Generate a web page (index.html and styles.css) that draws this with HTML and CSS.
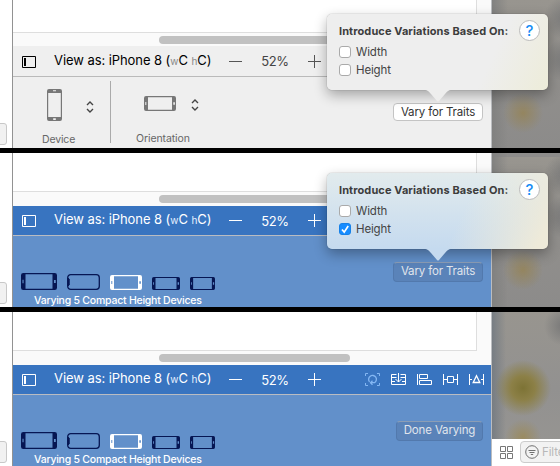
FILE: index.html
```
<!DOCTYPE html>
<html lang="en">
<head>
<meta charset="utf-8">
<title>Vary for Traits</title>
<link rel="stylesheet" href="styles.css">
</head>
<body>
<svg width="0" height="0" class="defs">
  <symbol id="sidebar" viewBox="0 0 14 12"><path d="M.5.5h13v11H.5z" fill="none" stroke="currentColor"/><path d="M2 2h2v8H2z" fill="currentColor"/></symbol>
  <symbol id="phone" viewBox="0 0 32 15" preserveAspectRatio="none"><path fill="currentColor" fill-rule="evenodd" d="M2 0h28q2 0 2 2v11q0 2-2 2H2q-2 0-2-2V2q0-2 2-2zM4 1.2v12.6h24V1.2zM1.3 6v3h1V6zM29.3 6.2v2.6h1.6V6.2z"/></symbol>
  <symbol id="phonex" viewBox="0 0 33 16"><rect x=".7" y=".7" width="31.6" height="14.6" rx="3" fill="none" stroke="currentColor" stroke-width="1.3"/><path d="M1 4l1.2 1v6L1 12z" fill="currentColor" stroke="currentColor"/></symbol>
  <symbol id="minus" viewBox="0 0 13 13"><path d="M0 6.5h13" stroke="currentColor"/></symbol>
  <symbol id="plus" viewBox="0 0 13 13"><path d="M0 6.5h13M6.5 0v13" stroke="currentColor"/></symbol>
  <symbol id="updown" viewBox="0 0 8 12"><path d="M1 4l3-3 3 3M1 8l3 3 3-3" fill="none" stroke="currentColor" stroke-width="1.4"/></symbol>
</svg>

<section class="panel first">
  <div class="left"><i class="stub"></i></div>
  <div class="main">
    <div class="canvas"></div>
    <div class="track"><i class="thumb"></i></div>
    <div class="bar">
      <svg class="side-icon"><use href="#sidebar"/></svg>
      <span class="title">View as: iPhone 8 (<small>w</small>C <small>h</small>C)</span>
      <svg class="sign"><use href="#minus"/></svg><span class="pct">52%</span><svg class="sign"><use href="#plus"/></svg>
    </div>
    <div class="tray traits">
      <div class="device">
        <div class="pick"><svg class="portrait" viewBox="0 0 15 32"><use href="#phone" width="32" height="15" transform="translate(15 0) rotate(90)"/></svg><svg class="updown"><use href="#updown"/></svg></div>
        <span>Device</span>
      </div>
      <div class="orientation">
        <div class="pick"><svg class="landscape"><use href="#phone"/></svg><svg class="updown"><use href="#updown"/></svg></div>
        <span>Orientation</span>
      </div>
      <button class="vary">Vary for Traits</button>
    </div>
  </div>
  <div class="right"></div>
  <div class="popover">
    <h2>Introduce Variations Based On:</h2><b class="help">?</b>
    <label><i class="check"></i>Width</label>
    <label><i class="check"></i>Height</label>
    <svg class="arrow" viewBox="0 0 28 13"><path d="M0 0c4 0 5 2 7 4l6 7q1 1 2 0l6-7c2-2 3-4 7-4z" fill="#eeeeed"/></svg>
  </div>
</section>

<section class="panel second blue">
  <div class="left"><i class="stub"></i></div>
  <div class="main">
    <div class="canvas"></div>
    <div class="track"><i class="thumb"></i></div>
    <div class="bar">
      <svg class="side-icon"><use href="#sidebar"/></svg>
      <span class="title">View as: iPhone 8 (<small>w</small>C <small>h</small>C)</span>
      <svg class="sign"><use href="#minus"/></svg><span class="pct">52%</span><svg class="sign"><use href="#plus"/></svg>
    </div>
    <div class="tray">
      <div class="varying">
        <div class="devices">
          <svg class="d1"><use href="#phone"/></svg><svg class="d2"><use href="#phonex"/></svg><svg class="d3"><use href="#phone"/></svg><svg class="d4"><use href="#phone"/></svg><svg class="d5"><use href="#phone"/></svg>
        </div>
        <span>Varying 5 Compact Height Devices</span>
      </div>
      <button class="vary">Vary for Traits</button>
    </div>
  </div>
  <div class="right"></div>
  <div class="popover">
    <h2>Introduce Variations Based On:</h2><b class="help">?</b>
    <label><i class="check"></i>Width</label>
    <label><i class="check on"><svg viewBox="0 0 12 12"><path d="M3 6.5l2.2 2.6L9.2 3" fill="none" stroke="#fff" stroke-width="1.7"/></svg></i>Height</label>
    <svg class="arrow" viewBox="0 0 28 13"><path d="M0 0c4 0 5 2 7 4l6 7q1 1 2 0l6-7c2-2 3-4 7-4z" fill="#c5daef"/></svg>
  </div>
</section>

<section class="panel third blue">
  <div class="left"><i class="stub"></i></div>
  <div class="main">
    <div class="canvas"></div>
    <div class="track"><i class="thumb"></i></div>
    <div class="bar">
      <svg class="side-icon"><use href="#sidebar"/></svg>
      <span class="title">View as: iPhone 8 (<small>w</small>C <small>h</small>C)</span>
      <svg class="sign"><use href="#minus"/></svg><span class="pct">52%</span><svg class="sign"><use href="#plus"/></svg>
      <div class="tools">
        <svg class="faded" viewBox="0 0 15 13"><path d="M3 .5H.5V3M.5 10v2.5H3M12 .5h2.5V3M14.5 10v2.5H12"/><path class="bold" d="M4.500 8.800A3.900 3.900 0 1 1 9.500 9.700H5.500M7.500 7.700l-2 2 2 2"/></svg>
        <svg viewBox="0 0 15 13"><path d="M5.500 1.500h-5v10h14v-10h-5M.5 4.500h5M9.500 4.500h5M.5 8.500H4M11 8.500h3.500M7.500 0v9M4.500 6l3 3 3-3"/></svg>
        <svg viewBox="0 0 15 13"><path d="M.5 1v11M2.500 1.500h8v4h-8zM2.500 7.500h12v4h-12z"/></svg>
        <svg viewBox="0 0 15 13"><path d="M.5 1v11M14.5 1v11M.5 6.500h4M10.500 6.500h4M4.500 3.500h6v6h-6z"/></svg>
        <svg viewBox="0 0 15 13"><path d="M.5 1v11M14.5 1v11M.5 6.500H3M12 6.500h2.500"/><path class="bold" d="M7.500 2.800l3.300 6.700H4.200z"/></svg>
      </div>
    </div>
    <div class="tray">
      <div class="varying">
        <div class="devices">
          <svg class="d1"><use href="#phone"/></svg><svg class="d2"><use href="#phonex"/></svg><svg class="d3"><use href="#phone"/></svg><svg class="d4"><use href="#phone"/></svg><svg class="d5"><use href="#phone"/></svg>
        </div>
        <span>Varying 5 Compact Height Devices</span>
      </div>
      <button class="vary done">Done Varying</button>
    </div>
  </div>
  <div class="right">
    <div class="filterbar">
      <svg class="grid" viewBox="0 0 13 13"><path d="M.5.5h5v5h-5zM7.5.5h5v5h-5zM.5 7.500h5v5h-5zM7.500 7.500h5v5h-5z"/></svg>
      <div class="filter"><svg viewBox="0 0 14 14"><circle cx="7" cy="7" r="6.300"/><path d="M3.500 5.500h7M4.500 7.500h5M5.800 9.500h2.400"/></svg><span>Filter</span></div>
    </div>
  </div>
</section>
</body>
</html>
```
FILE: styles.css
```
* { box-sizing: border-box; }
body { margin: 0; width: 560px; height: 466px; overflow: hidden; background: #000; display: flex; flex-direction: column; gap: 5px; font-family: Inter, "Liberation Sans", sans-serif; }
svg { display: block; flex: none; }
.defs { position: absolute; }
i { font-style: normal; display: block; }
.panel { position: relative; display: flex; overflow: hidden; flex: none; }
.first { height: 148px; }
.second, .third { height: 154px; }
.left { width: 13px; flex: none; background: #fff; border-right: 1px solid #929292; display: flex; align-items: flex-end; overflow: hidden; }
.stub { width: 10px; height: 22px; margin: 0 0 3px -3px; background: #f1f1f1; border: 1px solid #c8c8c8; border-radius: 3px; flex: none; }
.main { width: 479px; flex: none; display: flex; flex-direction: column; background: #fafafa; border-right: 1px solid #bbbdc0; }
.canvas { width: 464px; height: 33px; background: #fff; border-bottom: 1px solid #dedede; border-right: 1px solid #dedede; flex: none; }
.second .canvas, .third .canvas { height: 39px; }
.track { height: 13px; flex: none; padding: 3px 0 0 146px; }
.second .track, .third .track { height: 14px; }
.thumb { width: 191px; height: 8px; border-radius: 4px; background: #c1c1c1; }
.bar { height: 31px; flex: none; display: flex; align-items: center; padding-left: 9px; background: #efefef; border-bottom: 1px solid #bababa; color: #000; }
.blue .bar { height: 30px; background: #3874c0; border-color: #b9bcc2; color: #fff; }
.side-icon { width: 14px; height: 12px; margin: 1px 18px 0 0; }
.title { width: 175px; margin-top: -1px; font-size: 13px; line-height: 16px; letter-spacing: -.07px; white-space: pre; }
.blue .title { margin-top: -2px; }
.title small { font-size: 10px; color: #888; }
.blue .title small { color: #e6f0ff; }
.sign { width: 13px; height: 13px; color: #555; }
.blue .sign { color: #fff; }
.pct { width: 66px; text-align: center; font-size: 13px; letter-spacing: -.3px; color: #444; }
.blue .pct { color: #fff; }
.tray { flex: 1; display: flex; background: #efefef; }
.blue .tray { background: #6290ca; }
.vary { margin: 26px 8px 0 auto; width: 90px; height: 18px; padding: 0; font: 11.5px/16px Inter, sans-serif; letter-spacing: -.15px; color: #333; background: #fff; border: 1px solid #c4c4c4; border-radius: 4px; white-space: nowrap; }
.blue .vary { height: 20px; padding-bottom: 2px; background: #5a83b9; border-color: #5279ad; border-top-color: #8b9db5; color: #e0e5ec; }
.vary.done { width: 87px; }
.traits span { font-size: 10.5px; line-height: 14px; color: #666; }
.device { width: 98px; height: 62px; margin-top: 4px; border-right: 1px solid #aaa; padding: 8px 0 0 29px; }
.pick { height: 32px; display: flex; align-items: center; }
.portrait { width: 15px; height: 32px; margin-left: 5px; color: #777; }
.updown { width: 8px; height: 12px; margin: 3px 0 0 24px; color: #444; }
.device > span { display: block; margin-top: 12px; letter-spacing: -.15px; }
.orientation { width: 110px; padding: 10px 0 0 25px; }
.landscape { width: 32px; height: 15px; margin-left: 8px; color: #777; }
.orientation .updown { margin: 4px 0 0 15px; }
.orientation > span { display: block; margin-top: 13px; letter-spacing: -.1px; }
.varying { padding: 37px 0 0 8px; width: 220px; color: #fff; }
.devices { display: flex; align-items: flex-end; color: #061653; }
.d1 { width: 36px; height: 17px; }
.d2 { width: 33px; height: 16px; margin-left: 10px; }
.d3 { width: 32px; height: 15px; margin-left: 10px; color: #fff; }
.d4 { width: 28px; height: 13px; margin-left: 10px; }
.d5 { width: 25px; height: 13px; margin-left: 10px; }
.varying > span { display: block; margin: 4px 0 0 13px; font-size: 10.5px; line-height: 13px; font-weight: 500; white-space: nowrap; letter-spacing: -.23px; }
.tools { display: flex; gap: 11px; margin-left: 44px; }
.tools svg { width: 15px; height: 13px; fill: none; stroke: #fff; }
.tools .faded { stroke: #84b7f3; }
.tools .bold { stroke-width: 1.3; }
.right { width: 68px; flex: none; display: flex; align-items: flex-end; background: radial-gradient(circle at 31px 113px, #94855f 0, rgba(148,133,95,0) 20px), radial-gradient(circle at 74px 18px, #777 0, rgba(119,119,119,0) 22px), radial-gradient(circle at 74px 60px, #777 0, rgba(119,119,119,0) 22px), linear-gradient(90deg, #818180, rgba(140,140,140,0) 16px), linear-gradient(#98958f, #918f8c 50%, #8c8b8a); }
.second .right { background-position: 0 4px; }
.third .right { background: radial-gradient(circle at 31px 76px, #7d7335 0, #8c8047 12px, rgba(146,137,92,0) 28px), radial-gradient(circle at 31px 125px, #9a8b61 0, rgba(154,139,97,0) 18px), radial-gradient(circle at 72px 14px, #777 0, rgba(119,119,119,0) 20px), linear-gradient(90deg, #777d83, rgba(140,140,140,0) 14px), linear-gradient(#98958f, #929190 50%, #989692); }
.filterbar { width: 68px; height: 27px; background: #fff; display: flex; padding: 2px 0 0 8px; overflow: hidden; }
.grid { width: 13px; height: 13px; margin-top: 5px; fill: none; stroke: #777; }
.filter { width: 90px; height: 22px; flex: none; margin-left: 7px; border: 1px solid #ccc; border-radius: 4px; background: #f2f2f2; display: flex; align-items: center; gap: 3px; padding-left: 4px; font-size: 11.5px; letter-spacing: -.1px; color: #b8b8b8; }
.filter svg { width: 14px; height: 14px; fill: none; stroke: #707070; }
.popover { position: absolute; left: 327px; top: 14px; width: 221px; height: 76px; border-radius: 5px; background: linear-gradient(115deg, #eee 72%, #edecd9); box-shadow: 0 0 1px rgba(0,0,0,.5), 0 5px 13px rgba(0,0,0,.32); padding: 9px 0 0 12px; color: #444; }
.second .popover { background: linear-gradient(115deg, rgba(226,236,239,0) 60%, #eeead9 95%), linear-gradient(#e2ebed, #c5daef); top: 20px; }
.popover h2 { margin: 0 0 4px; font-size: 11px; line-height: 16px; font-weight: 700; letter-spacing: .09px; white-space: nowrap; color: #3c3c3c; }
.popover label { display: flex; align-items: center; height: 18px; font-size: 11.5px; letter-spacing: -.15px; }
.check { width: 12px; height: 12px; margin-right: 5px; background: #fff; border: 1px solid #aaa; border-radius: 3px; }
.check.on { background: #168cff; border-color: #1681e8; }
.check svg { margin: -1px; width: 12px; height: 12px; }
.help { position: absolute; right: 8px; top: 6px; width: 21px; height: 21px; border-radius: 50%; background: #fff; border: 1px solid #bbb; text-align: center; font-size: 15px; line-height: 19px; font-weight: 500; color: #168cf5; }
.arrow { position: absolute; left: 97px; top: 76px; width: 28px; height: 13px; }
```
